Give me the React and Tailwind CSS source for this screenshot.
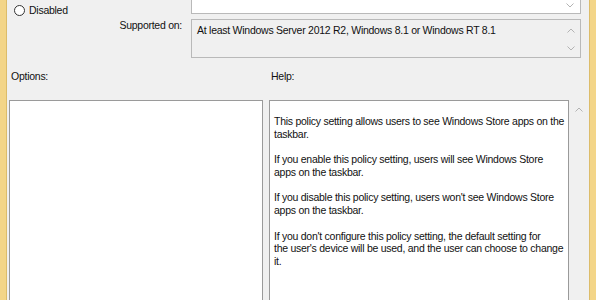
import React from "react";

const font = { fontFamily: '"Liberation Sans", Arial, sans-serif' };

function ChevronUp({ className }) {
    return (
        <svg width="8" height="5" viewBox="0 0 8 5" className={className}>
            <polyline points="0.5,4.5 4,1 7.5,4.5" fill="none" stroke="#b3b3b3" strokeWidth="1" />
        </svg>
    );
}

function ChevronDown({ className }) {
    return (
        <svg width="8" height="5" viewBox="0 0 8 5" className={className}>
            <polyline points="0.5,0.5 4,4 7.5,0.5" fill="none" stroke="#b3b3b3" strokeWidth="1" />
        </svg>
    );
}

const helpText = [
    ["This policy setting allows users to see Windows Store apps on the", "taskbar."],
    ["If you enable this policy setting, users will see Windows Store", "apps on the taskbar."],
    ["If you disable this policy setting, users won't see Windows Store", "apps on the taskbar."],
    [
        "If you don't configure this policy setting, the default setting for",
        "the user's device will be used, and the user can choose to change",
        "it.",
    ],
];

export default function App() {
    return (
        <div
            className="w-[596px] h-[300px] overflow-hidden flex bg-[#f0f0f0] text-[10.5px] tracking-[-0.26px] leading-[12.75px] text-[#111]"
            style={font}
        >
            {/* left highlight strip */}
            <div className="w-[7px] shrink-0 bg-[#f3d588] border-r border-[#dcbc6a]" />

            <div className="flex-1 flex flex-col">
                {/* state row */}
                <div className="flex h-[14px]">
                    <div className="w-[184px] shrink-0 flex items-center pl-[7px] pt-[6px]">
                        <span className="w-[11px] h-[11px] rounded-full border border-[#333] bg-white shrink-0" />
                        <span className="ml-[4px]">Disabled</span>
                    </div>
                    <div className="w-[390px] h-[14px] bg-white border-x border-b border-[#b9b9b9] flex justify-end items-start pr-[6px] pt-[3px]">
                        <ChevronDown />
                    </div>
                </div>

                {/* supported on */}
                <div className="flex mt-[5px]">
                    <div className="w-[184px] shrink-0 text-right pr-[9px]">Supported on:</div>
                    <div className="w-[390px] h-[39px] border border-[#b9b9b9] flex">
                        <div className="flex-1 pl-[5px] pt-[4px] whitespace-nowrap">
                            At least Windows Server 2012 R2, Windows 8.1 or Windows RT 8.1
                        </div>
                        <div className="w-[18px] flex flex-col items-center justify-between pt-[8px] pb-[6px]">
                            <ChevronUp />
                            <ChevronDown />
                        </div>
                    </div>
                </div>

                {/* labels */}
                <div className="flex mt-[12px]">
                    <div className="w-[260px] pl-[4px]">Options:</div>
                    <div className="pl-[4px]">Help:</div>
                </div>

                {/* panels */}
                <div className="flex flex-1 mt-[17px]">
                    <div className="ml-[2px] w-[254px] bg-white border-l border-t border-r border-[#9a9a9a]" />
                    <div className="ml-[6px] w-[300px] bg-white border-l border-t border-r border-[#9a9a9a] pl-[4px] pt-[14px] whitespace-nowrap">
                        {helpText.map((lines, i) => (
                            <p key={i} className="mb-[12.75px]">
                                {lines.map((l, j) => (
                                    <span key={j} className="block">{l}</span>
                                ))}
                            </p>
                        ))}
                    </div>
                    <div className="flex-1 flex justify-center pt-[7px]">
                        <ChevronUp />
                    </div>
                </div>
            </div>

            {/* right highlight strip */}
            <div className="w-[7px] shrink-0 bg-[#f3d588] border-l border-[#dcbc6a]" />
        </div>
    );
}
